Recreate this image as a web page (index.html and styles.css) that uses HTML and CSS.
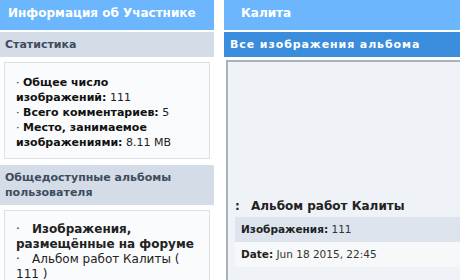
FILE: index.html
```html
<!DOCTYPE html>
<html lang="ru">
<head>
    <meta charset="UTF-8">
    <meta name="viewport" content="width=device-width, initial-scale=1.0">
    <title>Альбом работ Калиты</title>
    <link rel="stylesheet" href="styles.css">
</head>
<body>
    <div class="page">
        <div class="sidebar">
            <div class="block-head">Информация об Участнике</div>

            <div class="block-sub">Статистика</div>
            <div class="block-box">
                <div class="stat">· <b>Общее число изображений:</b> 111</div>
                <div class="stat">· <b>Всего комментариев:</b> 5</div>
                <div class="stat">· <b>Место, занимаемое изображениями:</b> 8.11 MB</div>
            </div>

            <div class="block-sub">Общедоступные альбомы пользователя</div>
            <div class="block-box albums">
                <div class="album-title"><span class="dot">·</span>Изображения, размещённые на форуме</div>
                <div class="album-link"><span class="dot">·</span>Альбом работ Калиты ( 111 )</div>
            </div>
        </div>

        <div class="main">
            <div class="block-head main-head">Калита</div>
            <div class="tab-bar">Все изображения альбома</div>
            <div class="gallery">
                <div class="album-name"><span class="colon">:</span>Альбом работ Калиты</div>
                <div class="row row-alt"><b>Изображения:</b> 111</div>
                <div class="row row-plain"><b>Date:</b> Jun 18 2015, 22:45</div>
            </div>
        </div>
    </div>
</body>
</html>
```

FILE: styles.css
```css
* {
    margin: 0;
    padding: 0;
    box-sizing: border-box;
}

body {
    background: #ffffff;
    font-family: "DejaVu Sans", Verdana, sans-serif;
    font-size: 11px;
    color: #222;
    overflow: hidden;
}

.page {
    display: flex;
    gap: 10px;
    width: 460px;
    height: 280px;
}

.sidebar {
    width: 214px;
    flex-shrink: 0;
}

.block-head {
    background: #6cb6fe;
    color: #fff;
    font-weight: bold;
    font-size: 12px;
    height: 30px;
    line-height: 27px;
    padding-left: 8px;
}

.block-sub {
    margin-top: 2px;
    background: #d3dce7;
    color: #3e4c5e;
    font-weight: bold;
    font-size: 11px;
    line-height: 15px;
    padding: 5px 5px;
}

.block-box {
    margin: 5px 4px 6px 4px;
    border: 1px solid #dde1e6;
    background: #fafbfc;
    padding: 12px 10px 8px 11px;
    line-height: 15px;
}

.stat b {
    color: #111;
}

.albums {
    padding-top: 11px;
}

.dot {
    display: inline-block;
    width: 16px;
    font-weight: normal;
}

.album-title {
    font-weight: bold;
    font-size: 12px;
    line-height: 15px;
}

.album-link {
    font-size: 12px;
    line-height: 15px;
}

.main {
    flex: 1;
    min-width: 0;
    overflow: hidden;
}

.main-head {
    padding-left: 17px;
}

.tab-bar {
    margin-top: 2px;
    background: #3a8cdc;
    color: #fff;
    font-weight: bold;
    font-size: 11px;
    letter-spacing: 0.9px;
    height: 25px;
    line-height: 25px;
    padding-left: 6px;
    white-space: nowrap;
}

.gallery {
    margin: 3px 0 0 2px;
    border-top: 2px solid #a9b1bc;
    border-left: 2px solid #a9b1bc;
    background: #eff3f8;
    height: 240px;
    padding: 137px 0 0 7px;
    width: 300px;
}

.album-name {
    font-weight: bold;
    font-size: 12px;
    line-height: 15px;
    padding-bottom: 3px;
}

.colon {
    display: inline-block;
    width: 16px;
}

.row {
    padding: 0 6px;
    height: 25px;
    line-height: 25px;
    font-size: 10.5px;
    color: #333;
}

.row-alt {
    background: #dde4ee;
}

.row-plain {
    background: #f7f8f9;
}

.row b {
    color: #222;
}
```
